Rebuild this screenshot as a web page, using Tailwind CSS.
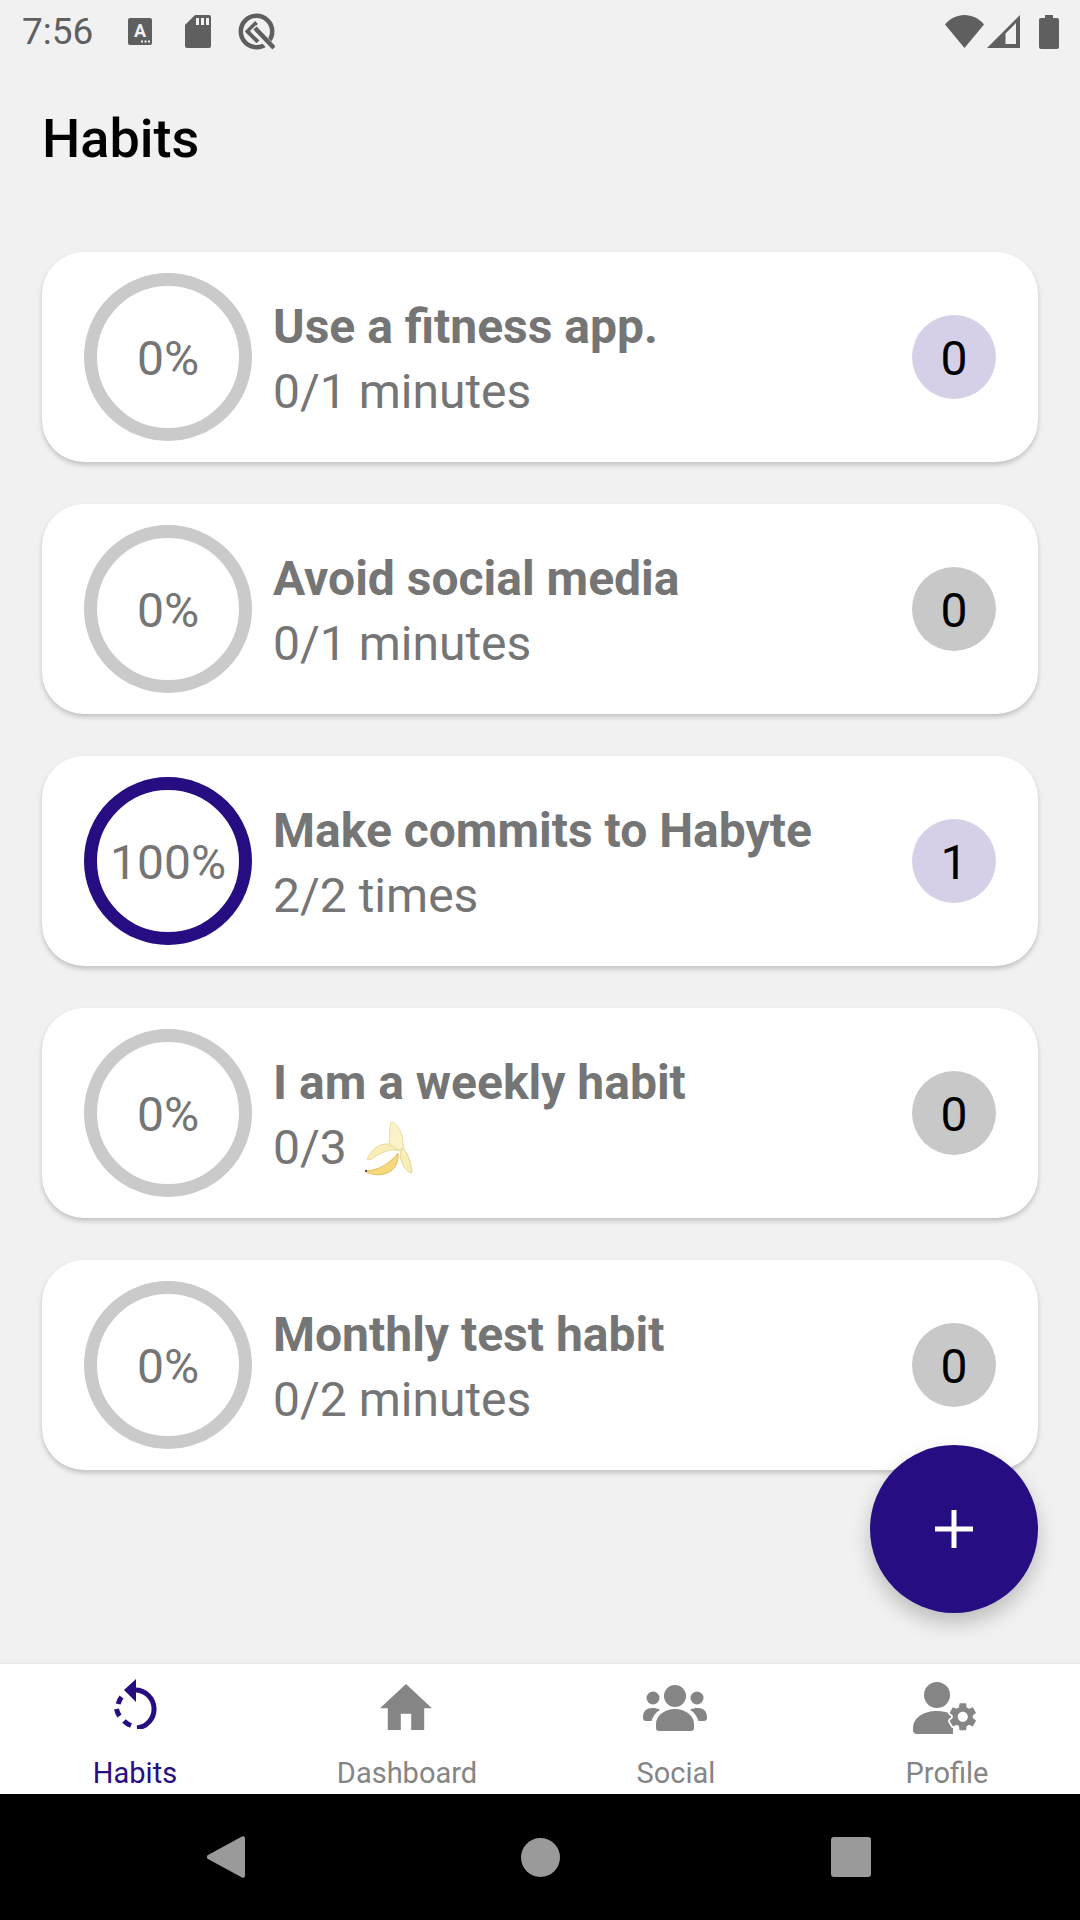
<!DOCTYPE html>
<html lang="en">

<head>
    <meta charset="UTF-8" />
    <meta name="viewport" content="width=device-width, initial-scale=1.0" />
    <title>Habits</title>
    <script src="https://cdn.jsdelivr.net/npm/@tailwindcss/browser@4"></script>
</head>

<body class="bg-[#f1f1f1]">
    <div class="relative w-[1080px] h-[1920px] flex flex-col bg-[#f1f1f1] font-['Roboto',sans-serif]">

        <!-- status bar -->
        <div class="h-[63px] flex items-center pl-[22px] pr-[21px] text-[#5f5f5f]">
            <span class="text-[37px] leading-none w-[106px]">7:56</span>
            <svg class="w-[24px] h-[27px]" viewBox="0 0 24 27">
                <rect width="24" height="27" rx="2" fill="#5f5f5f" />
                <text x="12" y="19" text-anchor="middle" font-size="18" font-weight="700" fill="#f1f1f1" font-family="Roboto">A</text>
                <path d="M13 22.500h2v2h-2zM16.500 22.500h2v2h-2zM20 22.500h2v2h-2z" fill="#f1f1f1" />
            </svg>
            <svg class="w-[26px] h-[33px] ml-[33px]" viewBox="0 0 26 33">
                <path d="M10 0h14a2 2 0 0 1 2 2v29a2 2 0 0 1-2 2H2a2 2 0 0 1-2-2V10z" fill="#5f5f5f" />
                <path d="M11 3h3v7h-3zM16 3h3v7h-3zM21 3h3v7h-3z" fill="#f1f1f1" />
            </svg>
            <svg class="w-[37px] h-[37px] ml-[27px]" viewBox="0 0 37 37">
                <circle cx="18.500" cy="18.500" r="15.700" fill="none" stroke="#5f5f5f" stroke-width="4.500" />
                <path d="M18.500 9.500l-9 9 9 9 4-4" fill="none" stroke="#5f5f5f" stroke-width="4" />
                <path d="M15 15l20 21" stroke="#f1f1f1" stroke-width="8" />
                <path d="M17 15l19 20" stroke="#5f5f5f" stroke-width="4.500" />
            </svg>
            <svg class="w-[39px] h-[33px] ml-auto" viewBox="0 0 39 33">
                <path d="M0 9.500C5 3.500 12 0 19.500 0S34 3.500 39 9.500L19.500 33z" fill="#5f5f5f" />
            </svg>
            <svg class="w-[33px] h-[33px] ml-[3px]" viewBox="0 0 33 33">
                <path fill-rule="evenodd" d="M33 0v33H0zM29 8L18.500 18.500V29H29z" fill="#5f5f5f" />
            </svg>
            <svg class="w-[20px] h-[34px] ml-[19px]" viewBox="0 0 20 34">
                <path d="M6 0h8v3h4a2 2 0 0 1 2 2v27a2 2 0 0 1-2 2H2a2 2 0 0 1-2-2V5a2 2 0 0 1 2-2h4z" fill="#5f5f5f" />
            </svg>
        </div>

        <h1 class="ml-[42px] mt-[46px] text-[54px] leading-[60px] font-medium text-black">Habits</h1>

        <!-- habit list -->
        <div class="mt-[83px] mx-[42px] flex flex-col gap-[42px]">

            <div class="h-[210px] bg-white rounded-[42px] shadow-[0_3px_5px_rgba(0,0,0,0.2)] flex items-center pl-[42px] pr-[42px]">
                <div class="w-[168px] h-[168px] pt-[4px] rounded-full border-[13px] border-[#cacaca] flex items-center justify-center text-[48px] text-[#757575]">0%</div>
                <div class="ml-[21px] pt-[3px] flex-1">
                    <div class="text-[48px] leading-[65px] font-bold text-[#757575]">Use a fitness app.</div>
                    <div class="text-[48px] leading-[65px] text-[#757575]">0/1 minutes</div>
                </div>
                <div class="w-[84px] h-[84px] pt-[4px] rounded-full bg-[#d5d0e8] flex items-center justify-center text-[48px] text-black">0</div>
            </div>

            <div class="h-[210px] bg-white rounded-[42px] shadow-[0_3px_5px_rgba(0,0,0,0.2)] flex items-center pl-[42px] pr-[42px]">
                <div class="w-[168px] h-[168px] pt-[4px] rounded-full border-[13px] border-[#cacaca] flex items-center justify-center text-[48px] text-[#757575]">0%</div>
                <div class="ml-[21px] pt-[3px] flex-1">
                    <div class="text-[48px] leading-[65px] font-bold text-[#757575]">Avoid social media</div>
                    <div class="text-[48px] leading-[65px] text-[#757575]">0/1 minutes</div>
                </div>
                <div class="w-[84px] h-[84px] pt-[4px] rounded-full bg-[#c8c8c8] flex items-center justify-center text-[48px] text-black">0</div>
            </div>

            <div class="h-[210px] bg-white rounded-[42px] shadow-[0_3px_5px_rgba(0,0,0,0.2)] flex items-center pl-[42px] pr-[42px]">
                <div class="w-[168px] h-[168px] pt-[4px] rounded-full border-[13px] border-[#260e82] flex items-center justify-center text-[48px] text-[#757575]">100%</div>
                <div class="ml-[21px] pt-[3px] flex-1">
                    <div class="text-[48px] leading-[65px] font-bold text-[#757575]">Make commits to Habyte</div>
                    <div class="text-[48px] leading-[65px] text-[#757575]">2/2 times</div>
                </div>
                <div class="w-[84px] h-[84px] pt-[4px] rounded-full bg-[#d5d0e8] flex items-center justify-center text-[48px] text-black">1</div>
            </div>

            <div class="h-[210px] bg-white rounded-[42px] shadow-[0_3px_5px_rgba(0,0,0,0.2)] flex items-center pl-[42px] pr-[42px]">
                <div class="w-[168px] h-[168px] pt-[4px] rounded-full border-[13px] border-[#cacaca] flex items-center justify-center text-[48px] text-[#757575]">0%</div>
                <div class="ml-[21px] pt-[3px] flex-1">
                    <div class="text-[48px] leading-[65px] font-bold text-[#757575]">I am a weekly habit</div>
                    <div class="h-[65px] flex items-center text-[48px] leading-[65px] text-[#757575]">
                        0/3
                        <!-- banana -->
                        <svg class="w-[50px] h-[54px] ml-[18px] mt-[3px]" viewBox="0 0 50 54">
                            <path d="M26 0c7 2 11 10 12 20l1 8c-6 2-12 0-15-4 1-8 0-16 2-24z" fill="#fbf3c9" stroke="#e8dca0" stroke-width="1" />
                            <path d="M37 26c5 4 9 12 10 25-6-1-10-8-12-17z" fill="#f7eeb8" stroke="#e4d591" stroke-width="1" />
                            <path d="M2 38c3-9 11-17 22-16l10 6c-10-1-20 3-27 9z" fill="#f9eeb8" stroke="#e8dca0" stroke-width="1" />
                            <path d="M0 49c10 0 23-5 33-18 1 9-3 17-11 20-8 3-16 2-22-2z" fill="#f5d97a" stroke="#e1bf62" stroke-width="1" />
                            <circle cx="1" cy="49" r="1.200" fill="#6b4a1e" />
                        </svg>
                    </div>
                </div>
                <div class="w-[84px] h-[84px] pt-[4px] rounded-full bg-[#c8c8c8] flex items-center justify-center text-[48px] text-black">0</div>
            </div>

            <div class="h-[210px] bg-white rounded-[42px] shadow-[0_3px_5px_rgba(0,0,0,0.2)] flex items-center pl-[42px] pr-[42px]">
                <div class="w-[168px] h-[168px] pt-[4px] rounded-full border-[13px] border-[#cacaca] flex items-center justify-center text-[48px] text-[#757575]">0%</div>
                <div class="ml-[21px] pt-[3px] flex-1">
                    <div class="text-[48px] leading-[65px] font-bold text-[#757575]">Monthly test habit</div>
                    <div class="text-[48px] leading-[65px] text-[#757575]">0/2 minutes</div>
                </div>
                <div class="w-[84px] h-[84px] pt-[4px] rounded-full bg-[#c8c8c8] flex items-center justify-center text-[48px] text-black">0</div>
            </div>
        </div>

        <!-- add button -->
        <div class="absolute left-[870px] top-[1445px] w-[168px] h-[168px] rounded-full bg-[#260e82] shadow-[0_10px_20px_rgba(0,0,0,0.22)] flex items-center justify-center">
            <svg class="w-[38px] h-[38px]" viewBox="0 0 38 38">
                <path d="M16.500 0h5v16.500H38v5H21.500V38h-5V21.500H0v-5h16.500z" fill="#fff" />
            </svg>
        </div>

        <!-- bottom nav -->
        <div class="mt-auto h-[131px] bg-white border-t border-[#e8e8e8] grid grid-cols-4 text-[29px] text-[#858585]">
            <div class="relative flex flex-col items-center text-[#260e82]">
                <svg class="w-[44px] h-[50px] mt-[15px]" viewBox="0 0 44 50">
                    <path d="M22 11a19 19 0 0 1 2 37.900" fill="none" stroke="#260e82" stroke-width="5" />
                    <path d="M8.500 18a19 19 0 0 0-3.300 7M3.500 30a19 19 0 0 0 3 7M11 42a19 19 0 0 0 7 4.500" fill="none" stroke="#260e82" stroke-width="5" />
                    <path d="M23 0v23L11 11z" fill="#260e82" />
                </svg>
                <span class="absolute top-[91px] leading-[36px]">Habits</span>
            </div>
            <div class="relative flex flex-col items-center">
                <svg class="w-[52px] h-[46px] mt-[20px] ml-[2px]" viewBox="2 3 20 17" preserveAspectRatio="none">
                    <path d="M10 20v-6h4v6h5v-8h3L12 3 2 12h3v8z" fill="#858585" />
                </svg>
                <span class="absolute top-[91px] leading-[36px] translate-x-[2px]">Dashboard</span>
            </div>
            <div class="relative flex flex-col items-center">
                <svg class="w-[64px] h-[46px] mt-[21px]" viewBox="0 0 64 46" fill="#858585">
                    <circle cx="32" cy="11" r="11" />
                    <circle cx="10" cy="13" r="6.500" />
                    <circle cx="54" cy="13" r="6.500" />
                    <path d="M13 46v-7c0-8 8-15 19-15s19 7 19 15v4a3 3 0 0 1-3 3H16a3 3 0 0 1-3-3z" />
                    <path d="M0 32c0-6 4-9 9-9 3 0 6 .5 8 2-4 2-7 6-8.500 11H3a3 3 0 0 1-3-3zM64 32c0-6-4-9-9-9-3 0-6 .5-8 2 4 2 7 6 8.500 11H61a3 3 0 0 0 3-3z" />
                </svg>
                <span class="absolute top-[91px] leading-[36px] translate-x-[1px]">Social</span>
            </div>
            <div class="relative flex flex-col items-center">
                <svg class="w-[66px] h-[52px] mt-[18px] ml-[2px]" viewBox="0 0 66 52" fill="#858585">
                    <circle cx="24" cy="13" r="13" />
                    <path d="M0 46c0-10 10-17 24-17 6 0 11 1 16 4v19H4a4 4 0 0 1-4-4z" />
                    <g transform="translate(33 18) scale(1.400)">
                        <path d="M19.140 12.940c.04-.3.06-.61.06-.94 0-.32-.02-.64-.07-.94l2.030-1.580c.18-.14.23-.41.12-.61l-1.920-3.320c-.12-.22-.37-.29-.59-.22l-2.390.96c-.5-.38-1.030-.7-1.620-.94l-.36-2.540c-.04-.24-.24-.41-.48-.41h-3.840c-.24 0-.43.17-.47.41l-.36 2.540c-.59.24-1.130.57-1.620.94l-2.390-.96c-.22-.08-.47 0-.59.22L2.740 8.870c-.12.21-.08.47.12.61l2.030 1.580c-.05.3-.09.63-.09.94s.02.64.07.94l-2.030 1.580c-.18.14-.23.41-.12.61l1.920 3.320c.12.22.37.29.59.22l2.390-.96c.5.38 1.030.7 1.620.94l.36 2.540c.05.24.24.41.48.41h3.840c.24 0 .44-.17.47-.41l.36-2.540c.59-.24 1.130-.56 1.620-.94l2.390.96c.22.08.47 0 .59-.22l1.920-3.320c.12-.22.07-.47-.12-.61l-2.010-1.580z" fill="#fff" stroke="#fff" stroke-width="2.500" />
                        <path fill-rule="evenodd" d="M19.140 12.940c.04-.3.06-.61.06-.94 0-.32-.02-.64-.07-.94l2.030-1.580c.18-.14.23-.41.12-.61l-1.920-3.320c-.12-.22-.37-.29-.59-.22l-2.390.96c-.5-.38-1.030-.7-1.620-.94l-.36-2.540c-.04-.24-.24-.41-.48-.41h-3.840c-.24 0-.43.17-.47.41l-.36 2.540c-.59.24-1.130.57-1.620.94l-2.390-.96c-.22-.08-.47 0-.59.22L2.740 8.870c-.12.21-.08.47.12.61l2.030 1.580c-.05.3-.09.63-.09.94s.02.64.07.94l-2.030 1.580c-.18.14-.23.41-.12.61l1.920 3.320c.12.22.37.29.59.22l2.390-.96c.5.38 1.030.7 1.620.94l.36 2.540c.05.24.24.41.48.41h3.840c.24 0 .44-.17.47-.41l.36-2.540c.59-.24 1.130-.56 1.620-.94l2.390.96c.22.08.47 0 .59-.22l1.920-3.320c.12-.22.07-.47-.12-.61l-2.010-1.580zM12 15.600c-1.980 0-3.600-1.620-3.600-3.600s1.620-3.600 3.600-3.600 3.600 1.620 3.600 3.600-1.620 3.600-3.600 3.600z" />
                    </g>
                </svg>
                <span class="absolute top-[91px] leading-[36px] translate-x-[2px]">Profile</span>
            </div>
        </div>

        <!-- android nav -->
        <div class="h-[126px] bg-black flex items-center justify-between pl-[207px] pr-[209px]">
            <svg class="w-[38px] h-[44px]" viewBox="0 0 38 44">
                <path d="M35 1.500a2 2 0 0 1 3 1.500v38a2 2 0 0 1-3 1.500L1 24a2.300 2.300 0 0 1 0-4z" fill="#9a9a9a" />
            </svg>
            <div class="w-[39px] h-[39px] ml-[4px] rounded-full bg-[#9a9a9a]"></div>
            <div class="w-[40px] h-[40px] rounded-[3px] bg-[#9a9a9a]"></div>
        </div>
    </div>
</body>

</html>
